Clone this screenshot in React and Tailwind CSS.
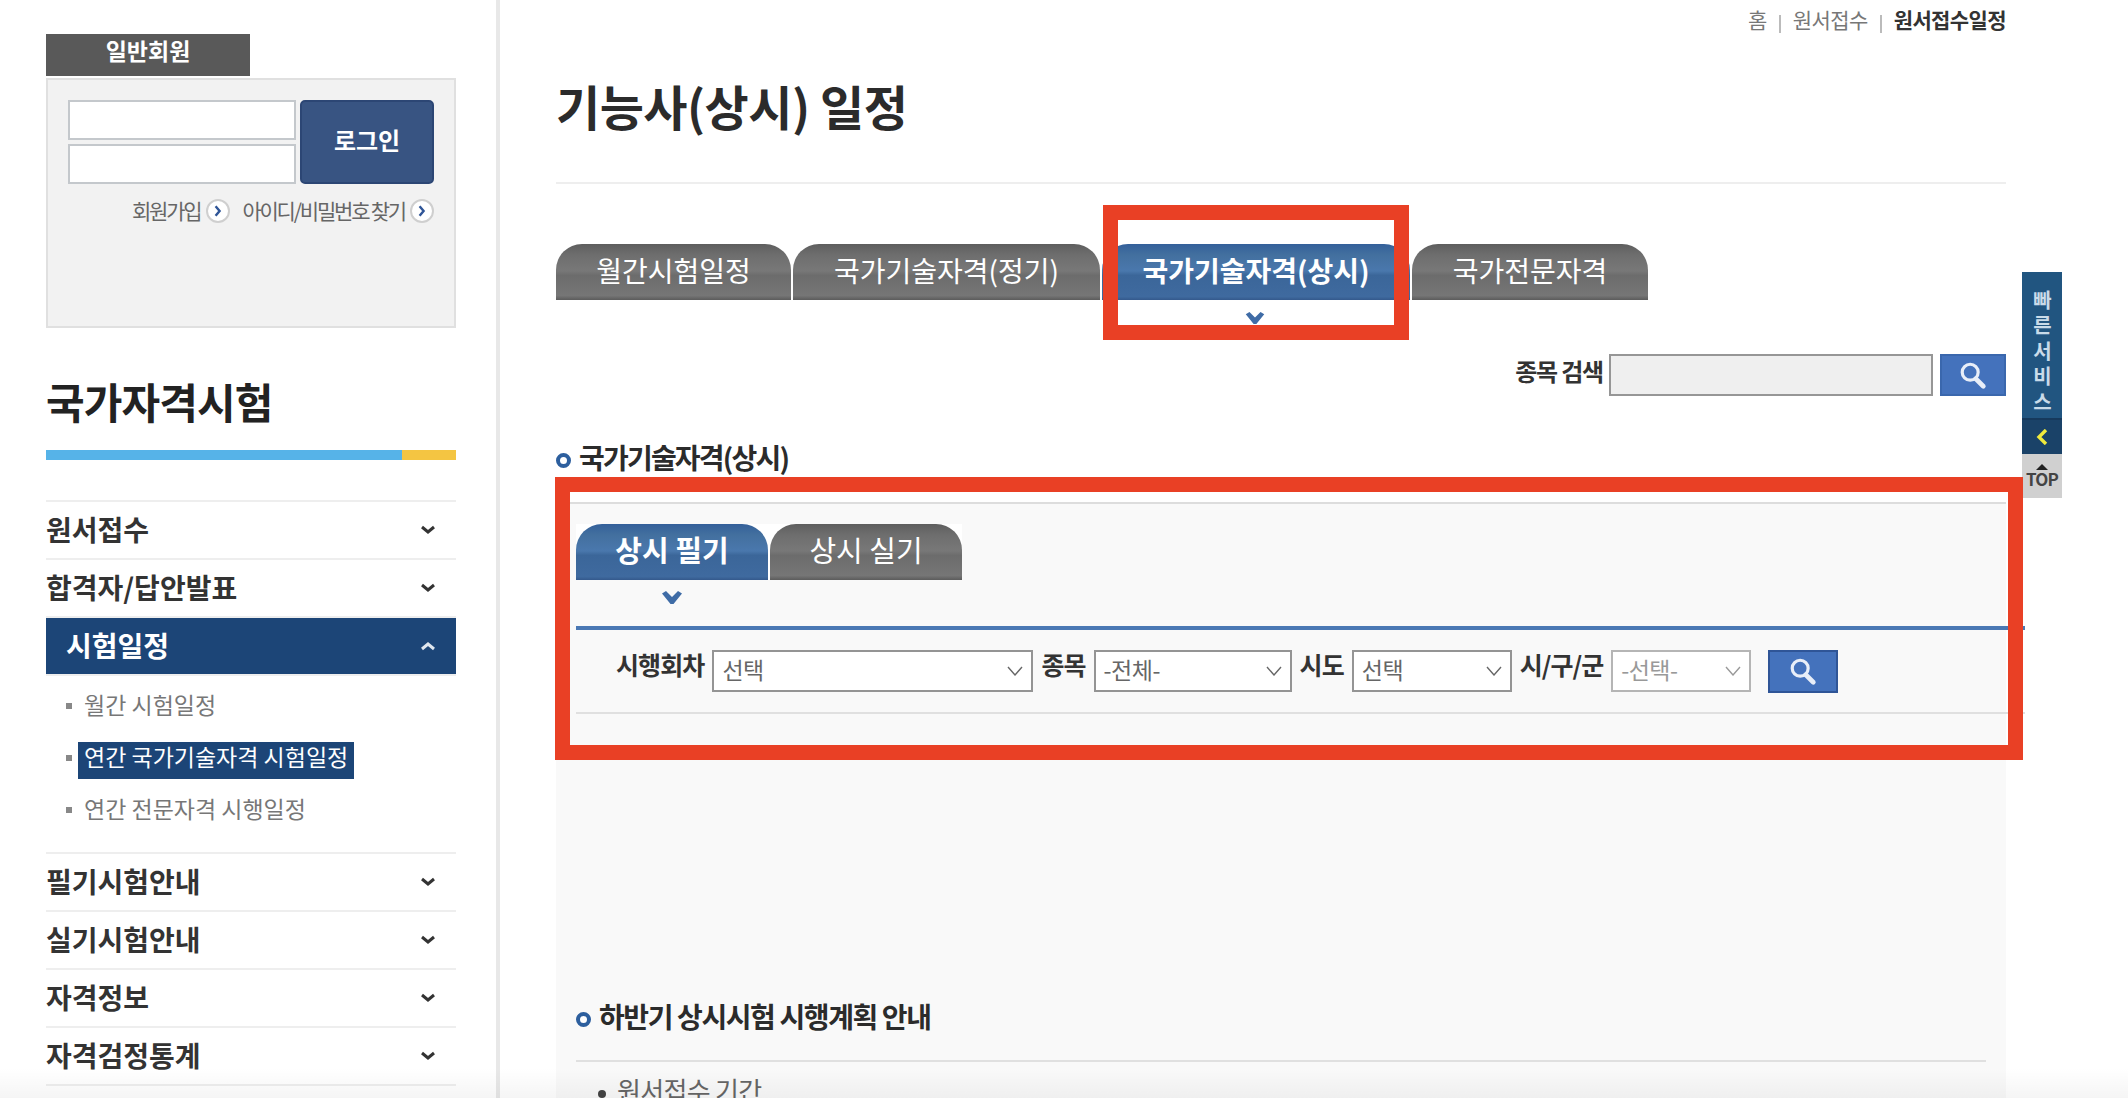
const tabGray = "bg-[linear-gradient(#5e5e5e_0%,#6e6e6e_20%,#787878_48%,#6c6c6c_56%,#767676_92%,#5c5c5c_100%)]";
const tabBlue = "bg-[linear-gradient(#34609a_0%,#43709f_20%,#4a78ad_48%,#3b6699_56%,#3f6a9f_94%,#34598c_100%)]";

const Chevron = ({ up, className }) => (
    <svg viewBox="0 0 16 10" className={className} fill="none" stroke="currentColor" strokeWidth="3">
        <path d={up ? "M2 8 L8 3 L14 8" : "M2 2 L8 7 L14 2"} />
    </svg>
);

const BlueChevron = ({ className }) => (
    <svg viewBox="0 0 20 13" className={className} fill="#3f6ca6">
        <path d="M0 2.5 L4 0 L10 6 L16 0 L20 2.5 L11.5 13 L8.5 13 Z" />
    </svg>
);

const SearchIcon = () => (
    <svg viewBox="0 0 32 32" className="w-[30px] h-[30px]" fill="none" stroke="#e8eef8">
        <circle cx="13" cy="13" r="8.5" strokeWidth="3.4" />
        <path d="M19 20 L27 28" strokeWidth="5" strokeLinecap="round" />
    </svg>
);

const CircleArrow = () => (
    <span className="w-6 h-6 rounded-full bg-white border-2 border-[#cfcfcf] flex items-center justify-center shrink-0">
        <svg viewBox="0 0 10 14" className="w-[8px] h-[12px]" fill="none" stroke="#2f5597" strokeWidth="3">
            <path d="M2 1 L7 7 L2 13" />
        </svg>
    </span>
);

const MenuRow = ({ label, active }) => (
    <div className="border-t-2 border-[#eeeeee] h-[58px]">
        <div className={`h-[56px] flex items-center justify-between pr-[20px] text-[28px] font-bold ${active ? "bg-[#1c4577] text-white pl-[20px]" : "text-[#333333]"}`}>
            <span className="mt-[-3px]">{label}</span>
            <Chevron up={active} className={`w-[16px] h-[10px] ${active ? "text-[#dfe6ee]" : "text-[#333333]"}`} />
        </div>
    </div>
);

const SubItem = ({ label, active }) => (
    <div className="h-[52px] flex items-center pl-[20px] text-[23px]">
        <span className="w-[6px] h-[6px] bg-[#888888] shrink-0 mt-[4px]" />
        {active ? (
            <span className="ml-[6px] mt-[9px] h-[37px] px-[6px] leading-[28px] bg-[#1c4577] text-white">{label}</span>
        ) : (
            <span className="ml-[12px] text-[#777777]">{label}</span>
        )}
    </div>
);

const Tab = ({ label, active, width, size = "text-[28px]" }) => (
    <div className={`h-[56px] rounded-t-[26px] flex items-center justify-center pb-[5px] text-white ${size} ${width} ${active ? `font-bold ${tabBlue}` : tabGray}`}>
        {label}
    </div>
);

const Select = ({ label, width, disabled }) => (
    <div className={`h-[42px] ${width} bg-white border-2 flex items-center justify-between pl-[8px] pr-[8px] text-[23px] tracking-[-0.5px] ${disabled ? "border-[#b5b5b5] text-[#999999]" : "border-[#949494] text-[#666666]"}`}>
        <span className="mt-[-4px]">{label}</span>
        <svg viewBox="0 0 16 10" className="w-[16px] h-[10px]" fill="none" stroke={disabled ? "#999999" : "#666666"} strokeWidth="1.4">
            <path d="M1 1 L8 9 L15 1" />
        </svg>
    </div>
);

const Label = ({ children, tracking = "tracking-[-0.9px]" }) => (
    <span className={`text-[25px] font-bold text-[#333333] mt-[-12px] ${tracking}`}>{children}</span>
);

const SectionTitle = ({ children, className, tracking }) => (
    <div className={`flex items-center ${className}`}>
        <span className="w-[15px] h-[15px] rounded-full border-[4px] border-[#2d5f9e] bg-white shrink-0 mt-[3px]" />
        <span className={`ml-[8px] mt-[-4px] text-[28px] font-bold text-[#2b2b2b] ${tracking}`}>{children}</span>
    </div>
);

const Sidebar = () => (
    <aside className="w-[500px] h-full shrink-0 pl-[46px] pr-[40px] pt-[34px] border-r-4 border-[#e8e8e8]">
        <div className="w-[204px] h-[42px] bg-[#595959] text-white text-[23px] leading-[32px] font-bold flex justify-center">일반회원</div>
        <div className="mt-[2px] h-[250px] bg-[#f2f2f2] border-2 border-[#e0e0e0] px-[20px] pt-[20px]">
            <div className="flex gap-[4px]">
                <div className="flex flex-col gap-[4px]">
                    <input className="w-[228px] h-[40px] bg-white border-2 border-[#c4c8cc]" />
                    <input className="w-[228px] h-[40px] bg-white border-2 border-[#c4c8cc]" />
                </div>
                <button className="w-[134px] h-[84px] rounded-[5px] bg-[#385482] border-2 border-[#2c4674] text-white text-[24px] font-bold pb-[4px]">로그인</button>
            </div>
            <div className="mt-[11px] flex items-center justify-end text-[#666666] text-[21px] tracking-[-2.2px]">
                <span>회원가입</span>
                <span className="ml-[6px]"><CircleArrow /></span>
                <span className="ml-[12px]">아이디/비밀번호 찾기</span>
                <span className="ml-[5px]"><CircleArrow /></span>
            </div>
        </div>
        <h2 className="mt-[53px] h-[40px] leading-[40px] text-[42px] font-bold text-[#222222] tracking-[-0.9px]">국가자격시험</h2>
        <div className="mt-[29px] h-[10px] flex">
            <div className="w-[356px] bg-[#56b3e8]" />
            <div className="flex-1 bg-[#f4c542]" />
        </div>
        <nav className="mt-[40px]">
            <MenuRow label="원서접수" />
            <MenuRow label="합격자/답안발표" />
            <MenuRow label="시험일정" active />
            <div className="border-t-2 border-[#eeeeee] h-[178px] pt-[2px]">
                <SubItem label="월간 시험일정" />
                <SubItem label="연간 국가기술자격 시험일정" active />
                <SubItem label="연간 전문자격 시행일정" />
            </div>
            <MenuRow label="필기시험안내" />
            <MenuRow label="실기시험안내" />
            <MenuRow label="자격정보" />
            <MenuRow label="자격검정통계" />
            <div className="border-t-2 border-[#eeeeee]" />
        </nav>
    </aside>
);

const Content = () => (
    <main className="w-[1450px] ml-[56px] shrink-0">
        <div className="h-[40px] flex items-center justify-end text-[21px] tracking-[-0.6px] text-[#777777]">
            <span>홈</span>
            <span className="w-[2px] h-[18px] bg-[#bbbbbb] mx-[12px] mt-[8px]" />
            <span>원서접수</span>
            <span className="w-[2px] h-[18px] bg-[#bbbbbb] mx-[12px] mt-[8px]" />
            <span className="font-bold text-[#333333]">원서접수일정</span>
        </div>
        <h1 className="mt-[35px] h-[60px] leading-[60px] text-[48px] font-bold text-[#2b2b2b] tracking-[-0.5px]">기능사(상시) 일정</h1>
        <div className="mt-[47px] h-[2px] bg-[#eeeeee]" />

        <div className="mt-[60px] flex gap-[2px]">
            <Tab label="월간시험일정" width="w-[235px]" />
            <Tab label="국가기술자격(정기)" width="w-[307px]" />
            <Tab label="국가기술자격(상시)" width="w-[308px]" active />
            <Tab label="국가전문자격" width="w-[236px]" />
        </div>
        <div className="ml-[689px] mt-[12px] h-[12px]">
            <BlueChevron className="w-[20px] h-[12px]" />
        </div>

        <div className="mt-[30px] flex items-center justify-end">
            <span className="text-[24px] font-bold text-[#333333] tracking-[-1.2px] mt-[-8px]">종목 검색</span>
            <input className="ml-[6px] w-[324px] h-[42px] bg-[#efefef] border-2 border-[#969696]" />
            <button className="ml-[7px] w-[66px] h-[42px] bg-[#4472bc] border-2 border-[#3a67ad] flex items-center justify-center">
                <SearchIcon />
            </button>
        </div>

        <SectionTitle className="mt-[45px] h-[36px]" tracking="tracking-[-1.8px]">국가기술자격(상시)</SectionTitle>

        <section className="mt-[25px] min-h-[600px] bg-[#f9f9f9] border-t-2 border-[#dddddd] pl-[20px] pt-[20px]">
            <div className="flex gap-[2px] w-fit bg-white">
                <Tab label="상시 필기" width="w-[192px]" size="text-[29px]" active />
                <Tab label="상시 실기" width="w-[192px]" size="text-[29px]" />
            </div>
            <div className="ml-[86px] mt-[11px] h-[13px]">
                <BlueChevron className="w-[20px] h-[13px]" />
            </div>
            <div className="mt-[22px] w-[1449px] h-[88px] border-t-4 border-b-2 border-t-[#4a78b4] border-b-[#e0e0e0] pl-[40px] flex items-center gap-[8px]">
                <Label>시행회차</Label>
                <Select label="선택" width="w-[321px]" />
                <Label>종목</Label>
                <Select label="-전체-" width="w-[198px]" />
                <Label>시도</Label>
                <Select label="선택" width="w-[160px]" />
                <Label tracking="tracking-[-1px]">시/구/군</Label>
                <Select label="-선택-" width="w-[140px]" disabled />
                <button className="ml-[9px] w-[70px] h-[43px] bg-[#4472bc] border-2 border-[#2f5597] flex items-center justify-center">
                    <SearchIcon />
                </button>
            </div>

            <SectionTitle className="mt-[286px] h-[36px]" tracking="tracking-[-1.4px]">하반기 상시시험 시행계획 안내</SectionTitle>
            <div className="mt-[24px] w-[1410px] h-[2px] bg-[#e0e0e0]" />
            <div className="mt-[8px] flex items-center pl-[22px] text-[26px] text-[#666666] tracking-[-0.7px]">
                <span className="w-[8px] h-[8px] rounded-full bg-[#444444] mt-[9px] mr-[11px]" />
                원서접수 기간
            </div>
        </section>
    </main>
);

const QuickBar = () => (
    <div className="absolute left-[2022px] top-[272px] w-[40px]">
        <div className="h-[146px] bg-[#215580] flex justify-center pt-[18px] text-[20px] leading-[40px] font-bold tracking-[5.6px] text-[#c9dbe9] [writing-mode:vertical-rl]">
            빠른서비스
        </div>
        <div className="h-[36px] bg-[#1a4268] border-t-2 border-[#16395c] flex items-center justify-center">
            <svg viewBox="0 0 12 16" className="w-[12px] h-[16px]" fill="none" stroke="#f0ea3c" strokeWidth="3.4">
                <path d="M10 1 L3 8 L10 15" />
            </svg>
        </div>
        <div className="h-[44px] bg-[#d0d0d0] flex flex-col items-center pt-[10px] text-[17px] leading-[18px] font-bold tracking-[-0.8px] text-[#444444]">
            <span className="w-0 h-0 border-x-[6px] border-x-transparent border-b-[6px] border-b-[#222222]" />
            <span>TOP</span>
        </div>
    </div>
);

export default function App() {
    return (
        <div className="relative w-[2128px] h-[1098px] overflow-hidden bg-white flex font-['Noto_Sans_CJK_KR','Liberation_Sans',sans-serif]">
            <Sidebar />
            <Content />
            <QuickBar />
            {/* red callouts */}
            <div className="absolute left-[1103px] top-[205px] w-[306px] h-[135px] border-[15px] border-[#e94025]" />
            <div className="absolute left-[555px] top-[477px] w-[1468px] h-[283px] border-[15px] border-[#e94025]" />
            <div className="absolute left-0 right-0 bottom-0 h-[30px] bg-[linear-gradient(transparent,rgba(0,0,0,0.04))]" />
        </div>
    );
}
